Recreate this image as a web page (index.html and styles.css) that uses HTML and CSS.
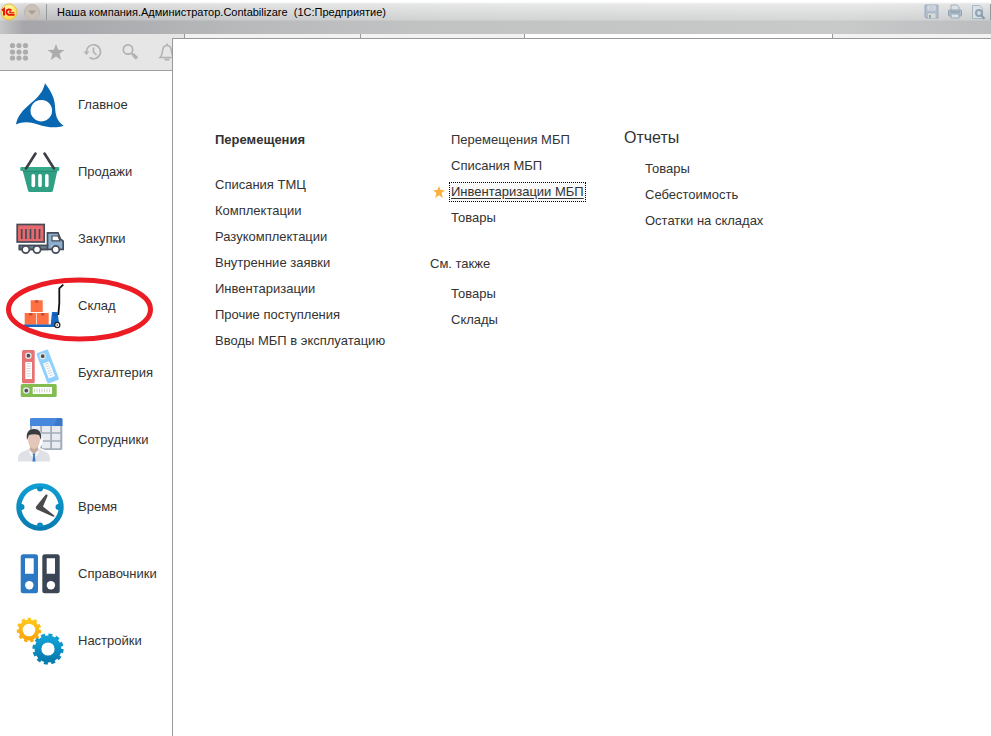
FILE: index.html
```html
<!DOCTYPE html>
<html lang="ru">
<head>
<meta charset="utf-8">
<title>Наша компания.Администратор.Contabilizare (1С:Предприятие)</title>
<link rel="stylesheet" href="styles.css">
</head>
<body>
<header class="titlebar">
  <button class="tb-btn" aria-label="1С">
    <svg width="18" height="18" viewBox="0 0 18 18"><defs><radialGradient id="yl" cx=".4" cy=".3" r=".8"><stop offset="0" stop-color="#fffbb0"/><stop offset="1" stop-color="#fbd336"/></radialGradient></defs><circle cx="9" cy="9" r="8" fill="url(#yl)" stroke="#e3bf5c"/><g fill="none" stroke="#e2140f" stroke-width="1.9"><path d="M2 7.500L4 6v6.400"/><path d="M11.300 7.600C10.500 5.800 6.500 6 6.500 9c0 2.600 2.300 3 3.500 2.800h4.500"/><path d="M11.300 9.200c-1-1.200-2.500-.6-2 .5h5" stroke-width="1"/></g></svg>
  </button>
  <button class="tb-btn" aria-label="Меню">
    <svg width="18" height="18" viewBox="0 0 18 18"><circle cx="9" cy="9" r="7.500" fill="#cac2b8" stroke="#bfb5aa"/><path d="M5 7.500h8L9 11.500z" fill="#a69c92"/></svg>
  </button>
  <span class="tb-sep"></span>
  <h1 class="tb-title">Наша компания.Администратор.Contabilizare&nbsp; (1С:Предприятие)</h1>
  <button class="tb-btn tool" aria-label="Сохранить">
    <svg width="16" height="16" viewBox="0 0 16 16"><path d="M1 1h13v13H2l-1-1z" fill="#a5b5c8" stroke="#8c9fb7"/><path d="M3.500 1.500h8v5h-8z" fill="#e3e7eb"/><path d="M4.500 3h6M4.500 5h6" stroke="#a5b2c2"/><path d="M4 9.500h7.500V14H4z" fill="#d4ded6"/><path d="M5 11h2v3H5z" fill="#8597aa"/></svg>
  </button>
  <button class="tb-btn tool" aria-label="Печать">
    <svg width="16" height="16" viewBox="0 0 16 16"><path d="M4 6V1h6l2 2v3" fill="#dce1e6" stroke="#91a5b7"/><rect x="1.500" y="6" width="13" height="6" rx="1" fill="#a3b5c5" stroke="#8298ac"/><path d="M3 8h10" stroke="#71889d"/><path d="M4 10h8v4H4z" fill="#dfe5ea" stroke="#8ba0b3"/></svg>
  </button>
  <button class="tb-btn tool" aria-label="Предварительный просмотр">
    <svg width="16" height="16" viewBox="0 0 16 16"><path d="M2.500 14.500V1.500h7l3 3v10z" fill="#dce1e5" stroke="#9bb0c0"/><circle cx="9" cy="9" r="3" fill="#d1dbe2" stroke="#7d96a9" stroke-width="2"/><path d="M11 11l3.500 4" stroke="#7890a2" stroke-width="2.200"/></svg>
  </button>
  <span class="tb-end"></span>
</header>
<div class="body">
  <aside class="sidebar">
    <div class="quick">
      <button aria-label="Все функции"><svg width="24" height="24" viewBox="0 0 24 24" fill="#acacac"><circle cx="5.500" cy="5.500" r="2.600"/><circle cx="12" cy="5.500" r="2.600"/><circle cx="18.500" cy="5.500" r="2.600"/><circle cx="5.500" cy="12" r="2.600"/><circle cx="12" cy="12" r="2.600"/><circle cx="18.500" cy="12" r="2.600"/><circle cx="5.500" cy="18" r="2.600"/><circle cx="12" cy="18" r="2.600"/><circle cx="18.500" cy="18" r="2.600"/></svg></button>
      <button aria-label="Избранное"><svg width="24" height="24" viewBox="0 0 24 24"><path d="M12 4l2.200 5.800 6.200.1-4.900 3.900 1.800 6.200-5.300-3.600L6.700 20l1.800-6.200-4.900-3.900 6.200-.1z" fill="#acacac"/></svg></button>
      <button aria-label="История"><svg width="24" height="24" viewBox="0 0 24 24" fill="none" stroke="#b2b2b2" stroke-width="1.700"><path d="M5.500 13V11.500a7 7 0 1 1 3 6"/><path d="M12.500 7.500V12l3 3"/><path d="M2.500 11.500h6l-3 3.500z" fill="#b2b2b2" stroke="none"/></svg></button>
      <button aria-label="Поиск"><svg width="24" height="24" viewBox="0 0 24 24" fill="none" stroke="#b2b2b2"><circle cx="10" cy="9.500" r="4.700" stroke-width="1.700"/><path d="M13.500 13l2 2" stroke-width="2"/><path d="M15 14.500l4 4" stroke-width="3.200"/></svg></button>
      <button aria-label="Оповещения"><svg width="24" height="24" viewBox="0 0 24 24" fill="none" stroke="#b2b2b2" stroke-width="1.600"><path d="M5 17.500c3-3 2-6 3-9 .6-2 2-3 4-3s3.400 1 4 3c1 3 0 6 3 9z"/><path d="M12 3.500v2" /><path d="M9.500 19.500h5" stroke-width="2"/></svg></button>
    </div>
    <nav class="sections">
      <a href="#"><svg viewBox="0 0 48 48"><path fill-rule="evenodd" fill="#0867b0" d="M29 2.300C34 9 38.500 16 39 25c.4 10 2 15 8.700 19.700C40 47.500 31 46.500 22 43.500 12 40 6 41 0 43.500 1 35 8 28 14.500 22.500 22 16.500 27 11 29 2.300zM25.300 18.900a10.800 10.800 0 1 0 .01 0z"/></svg>Главное</a>
      <a href="#"><svg viewBox="0 0 48 48"><path d="M6.500 22h35L37 42.500q-.3 1.500-2 1.500H14q-1.700 0-2-1.500z" fill="#2fa084"/><rect x="4.300" y="19" width="39" height="4" rx="1" fill="#36aa8b"/><path d="M7 23.300h34" stroke="#268871" stroke-width="1"/><g fill="#fff"><rect x="15.500" y="26" width="3.600" height="13.300" rx="1.800"/><rect x="22.200" y="26" width="3.600" height="13.300" rx="1.800"/><rect x="29" y="26" width="3.600" height="13.300" rx="1.800"/></g><path d="M19.500 5.500L10 20.500M28.500 5.500L38 20.500" stroke="#3b3d42" stroke-width="2.600" stroke-linecap="round"/></svg>Продажи</a>
      <a href="#"><svg viewBox="0 0 48 48" stroke="#454c57" stroke-width="1.700"><rect x="1.200" y="9.500" width="27" height="17.500" fill="#e6696d"/><path d="M5.700 14v10M10 14v10M14.500 14v10M19 14v10M23.500 14v10"/><path d="M3.500 30.500h28V17.800h10.500l2.300 6 2.900 2.500v8H3.500z" fill="#8bafd1"/><path d="M3.500 30.500h28v3.800h-28z" fill="#6c7f94"/><path d="M36 21h6l2 4.800h-8z" fill="#fff" stroke-width="1.200"/><path d="M35 31h3" stroke="#b7cde2"/><g fill="#fff"><circle cx="9.700" cy="34.500" r="3.600"/><circle cx="21" cy="34.500" r="3.600"/><circle cx="39.700" cy="34.500" r="3.600"/></g></svg>Закупки</a>
      <a href="#" class="marked"><svg viewBox="0 0 48 48"><g fill="#ff7043"><path d="M14.700 18.300h12V30h-12zM8.700 31h11.600v11.700H8.700zM21 31h11.700v11.700H21z"/></g><path d="M19 18.300h3.400v2.500H19zM13 31h3.400v2.500H13zM25 31h3.400v2.500H25z" fill="#bf5138"/><path d="M7.700 42.500h27L36 30h5.500l1.700 12-3 3H7.700z" fill="#1767c5"/><path d="M37 33h4" stroke="#0c4c96"/><path d="M47.300 2.700l-4 3.600v15L42.300 33" fill="none" stroke="#111" stroke-width="1.800"/><circle cx="41.300" cy="43" r="2.600" fill="#fff" stroke="#222" stroke-width="1.200"/><circle cx="41.300" cy="43" r=".8" fill="#222"/></svg>Склад
        <svg class="ring" viewBox="0 0 148 65"><ellipse cx="73.500" cy="32.500" rx="71" ry="29.500" fill="none" stroke="#ec1c24" stroke-width="5"/></svg></a>
      <a href="#"><svg viewBox="0 0 48 48"><rect x="6" y="1" width="12.700" height="33.300" rx="1.500" fill="#e57373"/><path d="M9.300 13h6.700v17H9.300z" fill="#fff"/><path d="M12.600 14v15" stroke="#cfd4d6" stroke-width="4" stroke-dasharray="1 1.500"/><g transform="rotate(-21 31.700 17.500)"><rect x="25.500" y="1.300" width="12.400" height="32.400" rx="1.500" fill="#90d0fc"/><path d="M28.500 13h6.400v16h-6.400z" fill="#fff"/><path d="M31.700 14v14" stroke="#ccd6da" stroke-width="4" stroke-dasharray="1 1.500"/></g><rect x="4.700" y="35" width="36" height="13" rx="1.500" fill="#83bd52"/><path d="M16.700 38H36v7H16.700z" fill="#fff"/><path d="M18 41.500h17" stroke="#cbd2c6" stroke-width="4" stroke-dasharray="1 1.500"/><g fill="#4b5357" stroke="#e4e5e5" stroke-width="1.400"><circle cx="12.400" cy="6.700" r="2.600"/><circle cx="26.700" cy="7.200" r="2.600"/><circle cx="10.300" cy="41.600" r="2.600"/></g></svg>Бухгалтерия</a>
      <a href="#"><svg viewBox="0 0 48 48"><rect x="14" y="2" width="32.300" height="32" rx="1.500" fill="#a3acba"/><path d="M14 10V3.500Q14 2 15.500 2h29.300q1.500 0 1.500 1.500V10z" fill="#4788dc"/><path d="M38 10l3-8h3.800q1.500 0 1.500 1.500V10z" fill="#3b78cb"/><path fill="#e8ebf0" d="M16 10h8.300v6.300H16zM26 10h8.300v6.300H26zM36 10h8.300v6.300H36zM16 17.800h8.300v6.500H16zM26 17.800h8.300v6.500H26zM36 17.800h8.300v6.500H36zM26 25.800h8.300v6.500H26zM36 25.800h8.300v6.500H36z"/><path d="M10 20c0-9 16-9 16 0 2 5 0 9-2 12 7 3 10 3 10.500 8V47H1V40c1-6 8-5 11-8-2-4-3-8-2-12z" fill="#fff"/><path d="M2 45.500c0-7 1-9 7-10.500l5-3h8l5 3c6 1.500 7 3.500 7 10.500z" fill="#dfe1e6"/><path d="M14 29h8v5l-4 4-4-4z" fill="#c9ab9b"/><ellipse cx="18" cy="23.500" rx="6" ry="9.500" fill="#e3c8ba"/><path d="M11 24c-1-7 1-11 7-11s8 4 7 11l-2-5c-3-1-7-1-10 0z" fill="#393d42"/><path d="M12 34l6 4 6-4-3 6h-6z" fill="#f5f6f8"/><path d="M16.600 37.500h2.800l-.6 2.500.8 5.500h-3.200l.8-5.500z" fill="#3c7bc4"/></svg>Сотрудники</a>
      <a href="#"><svg viewBox="0 0 48 48"><defs><linearGradient id="bl" x1="0" y1="0" x2="0" y2="1"><stop offset="0" stop-color="#10a0d4"/><stop offset="1" stop-color="#087baf"/></linearGradient></defs><path fill="url(#bl)" fill-rule="evenodd" d="M24 .3a23.700 23.700 0 1 0 .01 0zM24 5.300a18.700 18.700 0 1 1-.01 0z"/><path fill="#098bbf" d="M21 4h6v1.500a3 3 0 0 1-6 0zM21 44h6v-1.500a3 3 0 0 0-6 0zM4 21v6h1.500a3 3 0 0 0 0-6zM44 21v6h-1.500a3 3 0 0 1 0-6z"/><path d="M29.800 11.500q1.800-.5 1.800 1.200L27 23.500l11.500 9.300q.2 1.200-1.200 1L21 26.500q-2-1.500-.7-3.300z" fill="#4a4a4a"/></svg>Время</a>
      <a href="#"><svg viewBox="0 0 48 48"><rect x="4.700" y="4.300" width="17.300" height="39" rx="2.500" fill="#2c78c2"/><rect x="26.300" y="4.300" width="17.400" height="39" rx="2.500" fill="#3b4654"/><path d="M9 8.300h8.700v15.400H9zM30.700 8.300h8.300v15.400h-8.300z" fill="#fff"/><circle cx="13.300" cy="35.300" r="4.200" fill="#fff"/><circle cx="34.900" cy="35.300" r="4.200" fill="#fff"/></svg>Справочники</a>
      <a href="#"><svg viewBox="0 0 48 48" fill="none"><defs><linearGradient id="or" x1="0" y1="0" x2="0" y2="1"><stop offset="0" stop-color="#ffc61c"/><stop offset="1" stop-color="#fba50d"/></linearGradient></defs><g stroke="url(#or)"><circle cx="13" cy="13" r="8.400" stroke-width="4.200"/><circle cx="13" cy="13" r="11" stroke-width="2.600" stroke-dasharray="3.300 2.983"/></g><g stroke="url(#bl)"><circle cx="32" cy="32" r="10" stroke-width="6.800"/><circle cx="32" cy="32" r="14.200" stroke-width="2.800" stroke-dasharray="4 3.435"/></g></svg>Настройки</a>
    </nav>
  </aside>
  <div class="workspace">
    <div class="tabs"><span class="t0"></span><span class="t1"></span><span class="t2"></span><span class="t3"></span><span class="t4"></span></div>
    <main class="panel">
      <section class="col c1">
        <h2 class="strong">Перемещения</h2>
        <ul>
          <li><a href="#">Списания ТМЦ</a></li>
          <li><a href="#">Комплектации</a></li>
          <li><a href="#">Разукомплектации</a></li>
          <li><a href="#">Внутренние заявки</a></li>
          <li><a href="#">Инвентаризации</a></li>
          <li><a href="#">Прочие поступления</a></li>
          <li><a href="#">Вводы МБП в эксплуатацию</a></li>
        </ul>
      </section>
      <section class="col c2">
        <ul>
          <li><a href="#">Перемещения МБП</a></li>
          <li><a href="#">Списания МБП</a></li>
          <li class="fav"><svg width="12" height="12" viewBox="0 0 12 12"><path d="M6 0l1.600 4.100 4.400.2-3.400 2.800L9.800 12 6 9.200 2.200 12l1.200-4.900L0 4.300l4.400-.2z" fill="#fbb040"/></svg><a href="#" class="focused">Инвентаризации МБП</a></li>
          <li><a href="#">Товары</a></li>
        </ul>
        <h2 class="also">См. также</h2>
        <ul>
          <li><a href="#">Товары</a></li>
          <li><a href="#">Склады</a></li>
        </ul>
      </section>
      <section class="col c3">
        <h2 class="big">Отчеты</h2>
        <ul>
          <li><a href="#">Товары</a></li>
          <li><a href="#">Себестоимость</a></li>
          <li><a href="#">Остатки на складах</a></li>
        </ul>
      </section>
    </main>
  </div>
</div>
</body>
</html>
```
FILE: styles.css
```css
* { box-sizing: border-box; }
body {
  margin: 0;
  min-height: 100vh;
  display: flex;
  flex-direction: column;
  background: #fff;
  color: #333;
  font: 13px/26px "Liberation Sans", Arial, sans-serif;
}
a { color: inherit; text-decoration: none; }
h1, h2, ul { margin: 0; padding: 0; font-size: inherit; font-weight: normal; }
ul { list-style: none; }
button { border: 0; padding: 0; background: none; font: inherit; }
svg { display: block; flex: none; }

.titlebar {
  display: flex;
  align-items: center;
  height: 34px;
  padding: 3px 0 13px;
  background:
    linear-gradient(to bottom, #fff 0, #fff 2px, rgba(255,255,255,.6) 4px, rgba(255,255,255,.25) 20px, transparent 21px),
    linear-gradient(to right, #c6c7c8 0, #a6a6aa 24px, #a9aaad 80px, #b8b9bb 240px, #c2c4c4 450px, #c8c9c9 85%, #bcbdbf 100%);
}
.tb-btn { display: flex; width: 23px; }
.tb-sep, .tb-end { width: 1px; height: 16px; background: #98999c; }
.tb-title {
  flex: 1;
  padding-left: 10px;
  font-size: 11px;
  line-height: 18px;
  color: #000;
  white-space: nowrap;
}
.tool { justify-content: center; opacity: .8; }
.tb-end { margin-left: 1px; }

.body { flex: 1; display: flex; }
.sidebar { flex: none; width: 172px; }
.quick {
  display: flex;
  height: 37px;
  overflow: hidden;
  background: #e6e6e6;
  border-bottom: 1px solid #a0a0a0;
}
.quick button { flex: none; width: 37px; display: flex; align-items: center; justify-content: center; }
.sections a {
  position: relative;
  display: flex;
  align-items: center;
  gap: 14px;
  height: 67px;
  padding: 1px 0 0 16px;
}
.sections a > svg { width: 48px; height: 48px; }
.sections a > svg.ring { position: absolute; left: 6px; top: 5px; width: 148px; height: 65px; }

.workspace { flex: 1; display: flex; flex-direction: column; min-width: 0; }
.tabs { display: flex; height: 4px; background: #f2f2f2; }
.tabs span + span { border-left: 1px solid #999; }
.t0 { width: 12px; background: #e6e6e6; }
.t1 { width: 176px; }
.t2 { width: 164px; }
.t3 { width: 308px; background: #fff; }
.t4 { flex: 1; }
.panel {
  flex: 1;
  display: flex;
  align-items: flex-start;
  padding: 88px 0 40px 42px;
  border-top: 1px solid #999;
  border-left: 1px solid #999;
  white-space: nowrap;
}
.c1 { width: 215px; }
.c2 { width: 194px; }
.c2 ul, .c3 ul { padding-left: 21px; }
.col li { height: 26px; }
.strong { font-weight: bold; margin-bottom: 19px; }
.also { margin: 20px 0 4px; }
.big { font-size: 16px; line-height: 22px; margin-bottom: 7px; }
.fav { display: flex; align-items: center; margin-left: -18px; gap: 4px; }
.focused {
  padding: 0 1px;
  line-height: 18px;
  border: 1px dotted #000;
  background: #f8f8f8;
  text-decoration: underline;
  text-underline-offset: 2px;
}
```
